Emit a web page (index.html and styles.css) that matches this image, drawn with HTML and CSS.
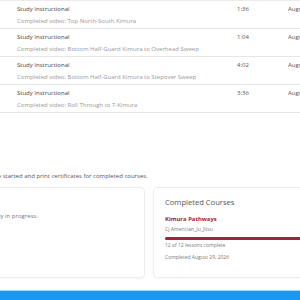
FILE: index.html
```html
<!DOCTYPE html>
<html lang="en">

<head>
    <meta charset="UTF-8">
    <title>My Progress</title>
    <link rel="stylesheet" href="styles.css">
</head>

<body>
    <div class="page">
        <div class="activity">
            <div class="row">
                <div class="cell when">Aug 29</div>
                <div class="cell what">
                    <div class="title">Study Instructional</div>
                    <div class="sub">Completed video: Top North-South Kimura</div>
                </div>
                <div class="cell time">1:36</div>
                <div class="cell date">August 29, 2026</div>
            </div>
            <div class="row">
                <div class="cell when">Aug 29</div>
                <div class="cell what">
                    <div class="title">Study Instructional</div>
                    <div class="sub">Completed video: Bottom Half-Guard Kimura to Overhead Sweep</div>
                </div>
                <div class="cell time">1:04</div>
                <div class="cell date">August 29, 2026</div>
            </div>
            <div class="row">
                <div class="cell when">Aug 29</div>
                <div class="cell what">
                    <div class="title">Study Instructional</div>
                    <div class="sub">Completed video: Bottom Half-Guard Kimura to Stepover Sweep</div>
                </div>
                <div class="cell time">4:02</div>
                <div class="cell date">August 29, 2026</div>
            </div>
            <div class="row">
                <div class="cell when">Aug 29</div>
                <div class="cell what">
                    <div class="title">Study Instructional</div>
                    <div class="sub">Completed video: Roll Through to T-Kimura</div>
                </div>
                <div class="cell time">3:36</div>
                <div class="cell date">August 29, 2026</div>
            </div>
        </div>

        <p class="intro">See progress of courses you've started and print certificates for completed courses.</p>

        <div class="cards">
            <div class="card">
                <h3>Courses In Progress</h3>
                <p class="empty">You don't have courses currently in progress.</p>
            </div>
            <div class="card">
                <h3>Completed Courses</h3>
                <div class="course-name">Kimura Pathways</div>
                <div class="author">Cj Americian_Ju_Jitsu</div>
                <div class="bar"><div class="fill" style="width: 100%"></div></div>
                <div class="meta">12 of 12 lessons complete</div>
                <div class="meta done">Completed August 29, 2026</div>
            </div>
        </div>
    </div>

    <div class="footer"></div>
</body>

</html>
```

FILE: styles.css
```css
body {
    font-family: "Open Sans", sans-serif;
    margin: 0;
    background-color: #fff;
    overflow: hidden;
    width: 300px;
    height: 300px;
    position: relative;
}

.page {
    margin-left: -100px;
    width: 560px;
}

.activity {
    border-top: 1px solid #ececec;
}

.row {
    display: flex;
    height: 27px;
    border-bottom: 1px solid #e6e6e6;
}

.cell {
    padding-top: 4px;
    font-size: 6px;
    line-height: 8px;
    color: #555;
}

.when {
    width: 117px;
    color: transparent;
}

.what {
    width: 220px;
}

.title {
    color: #444;
}

.sub {
    color: #999;
    margin-top: 4px;
}

.time {
    width: 51px;
}

.intro {
    margin: 59px 0 0 0;
    padding-left: 15px;
    font-size: 6px;
    color: #555;
}

.cards {
    display: flex;
    gap: 8px;
    margin-top: 7px;
}

.card {
    width: 300px;
    height: 91px;
    border: 1px solid #ececec;
    border-radius: 4px;
    box-shadow: 0 1px 2px rgba(0, 0, 0, 0.04);
    padding: 9px 11px;
    box-sizing: border-box;
}

.card:first-child {
    width: 245px;
}

h3 {
    margin: 0;
    font-size: 7.6px;
    font-weight: normal;
    color: #555;
}

.empty {
    margin: 5px 0 0 0;
    font-size: 6px;
    color: #777;
}

.course-name {
    margin-top: 8px;
    font-size: 5.9px;
    font-weight: bold;
    color: #a3223c;
}

.author {
    margin-top: 3px;
    font-size: 5px;
    color: #777;
}

.bar {
    margin-top: 5px;
    height: 3px;
    border-radius: 2px;
    background-color: #eee;
}

.fill {
    height: 100%;
    border-radius: 2px;
    background-color: #a3223c;
}

.meta {
    margin-top: 2px;
    font-size: 5px;
    color: #777;
}

.done {
    margin-top: 6px;
}

.footer {
    position: absolute;
    left: 0;
    right: 0;
    bottom: 0;
    height: 9px;
    background-color: #1a98f2;
    border-top: 1px solid #9fd6fb;
}
```
